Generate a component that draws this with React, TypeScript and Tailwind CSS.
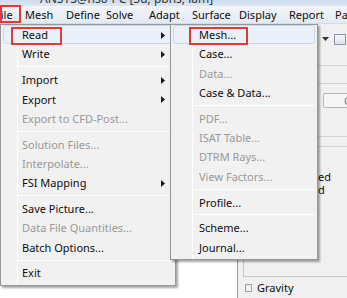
type Item = { label?: string; dim?: boolean; sub?: boolean; sep?: boolean; active?: boolean; box?: string }

const fileItems: Item[] = [
  { label: "Read", sub: true, active: true, box: "left-[7px] w-[51px]" },
  { label: "Write", sub: true },
  { sep: true },
  { label: "Import", sub: true },
  { label: "Export", sub: true },
  { label: "Export to CFD-Post...", dim: true },
  { sep: true },
  { label: "Solution Files...", dim: true },
  { label: "Interpolate...", dim: true },
  { label: "FSI Mapping", sub: true },
  { sep: true },
  { label: "Save Picture..." },
  { label: "Data File Quantities...", dim: true },
  { label: "Batch Options..." },
  { sep: true },
  { label: "Exit" },
]

const readItems: Item[] = [
  { label: "Mesh...", active: true, box: "left-[15px] w-[59px]" },
  { label: "Case..." },
  { label: "Data...", dim: true },
  { label: "Case & Data..." },
  { sep: true },
  { label: "PDF...", dim: true },
  { label: "ISAT Table...", dim: true },
  { label: "DTRM Rays...", dim: true },
  { label: "View Factors...", dim: true },
  { sep: true },
  { label: "Profile..." },
  { sep: true },
  { label: "Scheme..." },
  { label: "Journal..." },
]

const menuBar = [
  { label: "File", w: "w-[30px]" },
  { label: "Mesh", w: "w-[41px]" },
  { label: "Define", w: "w-[40px]" },
  { label: "Solve", w: "w-[43px]" },
  { label: "Adapt", w: "w-[43px]" },
  { label: "Surface", w: "w-[47px]" },
  { label: "Display", w: "w-[50px]" },
  { label: "Report", w: "w-[46px]" },
  { label: "Parallel", w: "w-[50px]" },
]

function Arrow() {
  return (
    <svg width="4" height="7" viewBox="0 0 4 7" className="shrink-0">
      <path d="M0 0 L4 3.5 L0 7 Z" fill="#1a1a1a" />
    </svg>
  )
}

function MenuList({ items, textLeft, gutter, arrowAt }: { items: Item[]; textLeft: string; gutter: string; arrowAt?: string }) {
  return (
    <div className="flex flex-col">
      {items.map((it, i) =>
        it.sep ? (
          <div key={i} className="h-[6.5px] flex items-center">
            <div className={`${gutter} h-px flex-1 bg-[#d9d9d9] border-b border-white mr-[2px]`} />
          </div>
        ) : (
          <div
            key={i}
            className={`h-[19.3px] relative flex items-center mx-[2px] rounded-[3px] border ${it.active ? "bg-[#e9f0f8] border-[#c8d7ea]" : "border-transparent"}`}
          >
            {it.box && <span className={`absolute ${it.box} top-[1px] h-[18px] border-2 border-[#e03a3a]`} />}
            <span className={`${textLeft} relative ${it.dim ? "text-[#999999]" : "text-[#0d0d0d]"}`}>{it.label}</span>
            {it.sub && <span className={`absolute ${arrowAt} top-[6px]`}><Arrow /></span>}
          </div>
        )
      )}
    </div>
  )
}

export default function App() {
  return (
    <div className="relative w-[347px] h-[298px] overflow-hidden bg-white text-[11px] leading-none" style={{ fontFamily: '"Noto Sans", "Open Sans", sans-serif' }}>
      {/* title bar (cut off) */}
      <div className="h-[6px] overflow-hidden bg-gradient-to-b from-[#cfdcec] to-[#dfe8f3]">
        <div className="-mt-[7px] pl-[40px] text-[12px] text-[#333] whitespace-nowrap">ANSYS@hs0-PC [3d, pbns, lam]</div>
      </div>

      {/* menu bar */}
      <div className="h-[18px] flex items-center bg-gradient-to-b from-[#f3f6fa] to-[#e4eaf2] border-b border-[#d3dbe6] whitespace-nowrap text-[#0d0d0d] -ml-[5px]">
        {menuBar.map((m, i) => (
          <div key={i} className={`${m.w} shrink-0 relative`}>
            {i === 0 && <span className="absolute left-[5px] w-[21px] -top-[4px] h-[18px] border-2 border-[#e03a3a]" />}
            <span>{m.label}</span>
          </div>
        ))}
      </div>

      {/* background window content */}
      <div className="flex h-[274px]">
        <div className="w-[237px] shrink-0 bg-white" />
        <div className="flex-1 bg-[#f0f0f0] border-l border-[#a0a0a0] flex flex-col relative">
          <div className="h-[9px]" />
          <div className="flex items-center h-[12px] pl-[84px] gap-[5px]">
            <svg width="7" height="4" viewBox="0 0 7 4"><path d="M0 0 L7 0 L3.5 4 Z" fill="#333" /></svg>
            <div className="w-[12px] h-[11px] border border-[#8a97a8] bg-gradient-to-b from-[#f4f6f8] to-[#dde3ea]" />
          </div>
          <div className="h-[21px] border-b border-[#d5d5d5]" />
          <div className="h-[18px] border-b border-[#d5d5d5]" />
          <div className="h-[9px]" />
          <div className="ml-[85px] w-[40px] h-[15px] border border-[#b5b5b5] bg-[#f6f6f6] rounded-[2px] text-[#777] pl-[20px] flex items-center">C</div>
          <div className="h-[29px] border-b border-[#d5d5d5]" />
          <div className="h-[10px] border-b border-[#d5d5d5]" />
          <div className="ml-[5px] flex-1 border-l border-b border-[#c6c6c6] flex flex-col">
            <div className="h-[23px]" />
            <div className="pl-[74px] text-[#0d0d0d] leading-[13px]">ed<br />d</div>
            <div className="flex-1" />
          </div>
          <div className="h-[21px] flex items-center pl-[7px] gap-[5px] text-[#0d0d0d]">
            <div className="w-[7px] h-[8px] border border-[#9aa3ad] bg-gradient-to-br from-[#e4e7ea] to-[#fafafa]" />
            <span className="-mt-[1px]">Gravity</span>
          </div>
        </div>
      </div>

      {/* File dropdown */}
      <div className="absolute left-0 top-[24px] w-[176px] h-[262px] bg-[#f1f1f1] border border-[#979797] shadow-[2px_2px_2px_rgba(0,0,0,0.35)] whitespace-nowrap">
        <div className="absolute left-[16px] top-0 bottom-0 w-px bg-[#e2e3e3] border-r border-white" />
        <MenuList items={fileItems} textLeft="pl-[18px]" gutter="ml-[17px]" arrowAt="left-[157px]" />
      </div>

      {/* Read submenu */}
      <div className="absolute left-[170px] top-[24px] w-[148px] h-[236px] bg-[#f1f1f1] border border-[#979797] shadow-[2px_2px_2px_rgba(0,0,0,0.35)] whitespace-nowrap">
        <div className="absolute left-[21px] top-0 bottom-0 w-px bg-[#e2e3e3] border-r border-white" />
        <MenuList items={readItems} textLeft="pl-[25px]" gutter="ml-[23px]" />
      </div>
    </div>
  )
}
